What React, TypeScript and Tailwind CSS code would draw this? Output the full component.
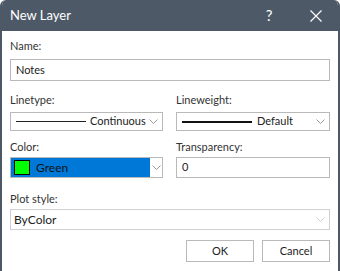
import React from "react";

const Chevron = ({ light }: { light?: boolean }) => (
  <svg width="9" height="6" viewBox="0 0 9 6" className="shrink-0">
    <path d="M0.5 0.5 L4.5 4.5 L8.5 0.5" fill="none" stroke={light ? "#cfcfcf" : "#999999"} strokeWidth="1" />
  </svg>
);

export default function App() {
  return (
    <div
      className="w-[340px] h-[271px] bg-white overflow-hidden flex flex-col rounded-t-[6px] border-x-2 border-[#4e5967] text-[11px] text-[#222]"
      style={{ fontFamily: 'Lato, "Noto Sans", sans-serif' }}
    >
      <div className="h-[31px] bg-[#4e5967] flex items-center shrink-0 text-white">
        <span className="ml-[8px] text-[13px] flex-1">New Layer</span>
        <span className="w-[20px] text-center text-[15px] mr-[31px]">?</span>
        <svg width="12" height="12" viewBox="0 0 12 12" className="mr-[16px]">
          <path d="M0.5 0.5 L11.5 11.5 M11.5 0.5 L0.5 11.5" stroke="white" strokeWidth="1.2" />
        </svg>
      </div>
      <div className="flex flex-col px-[8px] pt-[6px]">
        <div className="h-[18px] leading-[18px] text-[#333]">Name:</div>
        <div className="mt-[4px] h-[22px] border border-[#b9b9b9] flex items-center px-[5px]">Notes</div>

        <div className="mt-[10px] grid grid-cols-[153px_154px] gap-x-[13px]">
          <div className="flex flex-col">
            <div className="h-[18px] leading-[18px] text-[#333]">Linetype:</div>
            <div className="mt-[3px] h-[19px] border border-[#b9b9b9] flex items-center pl-[5px] pr-[4px]">
              <div className="w-[70px] h-px bg-[#222]" />
              <span className="ml-[4px] flex-1">Continuous</span>
              <Chevron />
            </div>
          </div>
          <div className="flex flex-col">
            <div className="h-[18px] leading-[18px] text-[#333]">Lineweight:</div>
            <div className="mt-[3px] h-[19px] border border-[#b9b9b9] flex items-center pl-[5px] pr-[4px]">
              <div className="w-[70px] h-[2px] bg-[#111]" />
              <span className="ml-[5px] flex-1">Default</span>
              <Chevron />
            </div>
          </div>
        </div>

        <div className="mt-[7px] grid grid-cols-[153px_154px] gap-x-[13px]">
          <div className="flex flex-col">
            <div className="h-[18px] leading-[18px] text-[#333]">Color:</div>
            <div className="mt-[1px] h-[21px] border border-[#b9b9b9] flex items-stretch">
              <div className="flex-1 bg-[#0078d7] flex items-center pl-[3px]">
                <div className="w-[16px] h-[15px] bg-[#00ff00] border border-black" />
                <span className="ml-[6px] text-[#111] text-[12px]">Green</span>
              </div>
              <div className="w-[12px] flex items-center justify-center">
                <Chevron />
              </div>
            </div>
          </div>
          <div className="flex flex-col">
            <div className="h-[18px] leading-[18px] text-[#333]">Transparency:</div>
            <div className="mt-[1px] h-[21px] border border-[#b9b9b9] flex items-center px-[5px]">0</div>
          </div>
        </div>

        <div className="mt-[12px] h-[18px] leading-[18px] text-[#333]">Plot style:</div>
        <div className="mt-[1px] h-[21px] border border-[#d0d0d0] flex items-center pl-[3px] pr-[4px]">
          <span className="flex-1 text-[12px]">ByColor</span>
          <Chevron light />
        </div>

        <div className="mt-[10px] flex justify-end gap-[8px]">
          <div className="w-[68px] h-[22px] border border-[#b9b9b9] flex items-center justify-center">OK</div>
          <div className="w-[68px] h-[22px] border border-[#b9b9b9] flex items-center justify-center">Cancel</div>
        </div>
      </div>
    </div>
  );
}
